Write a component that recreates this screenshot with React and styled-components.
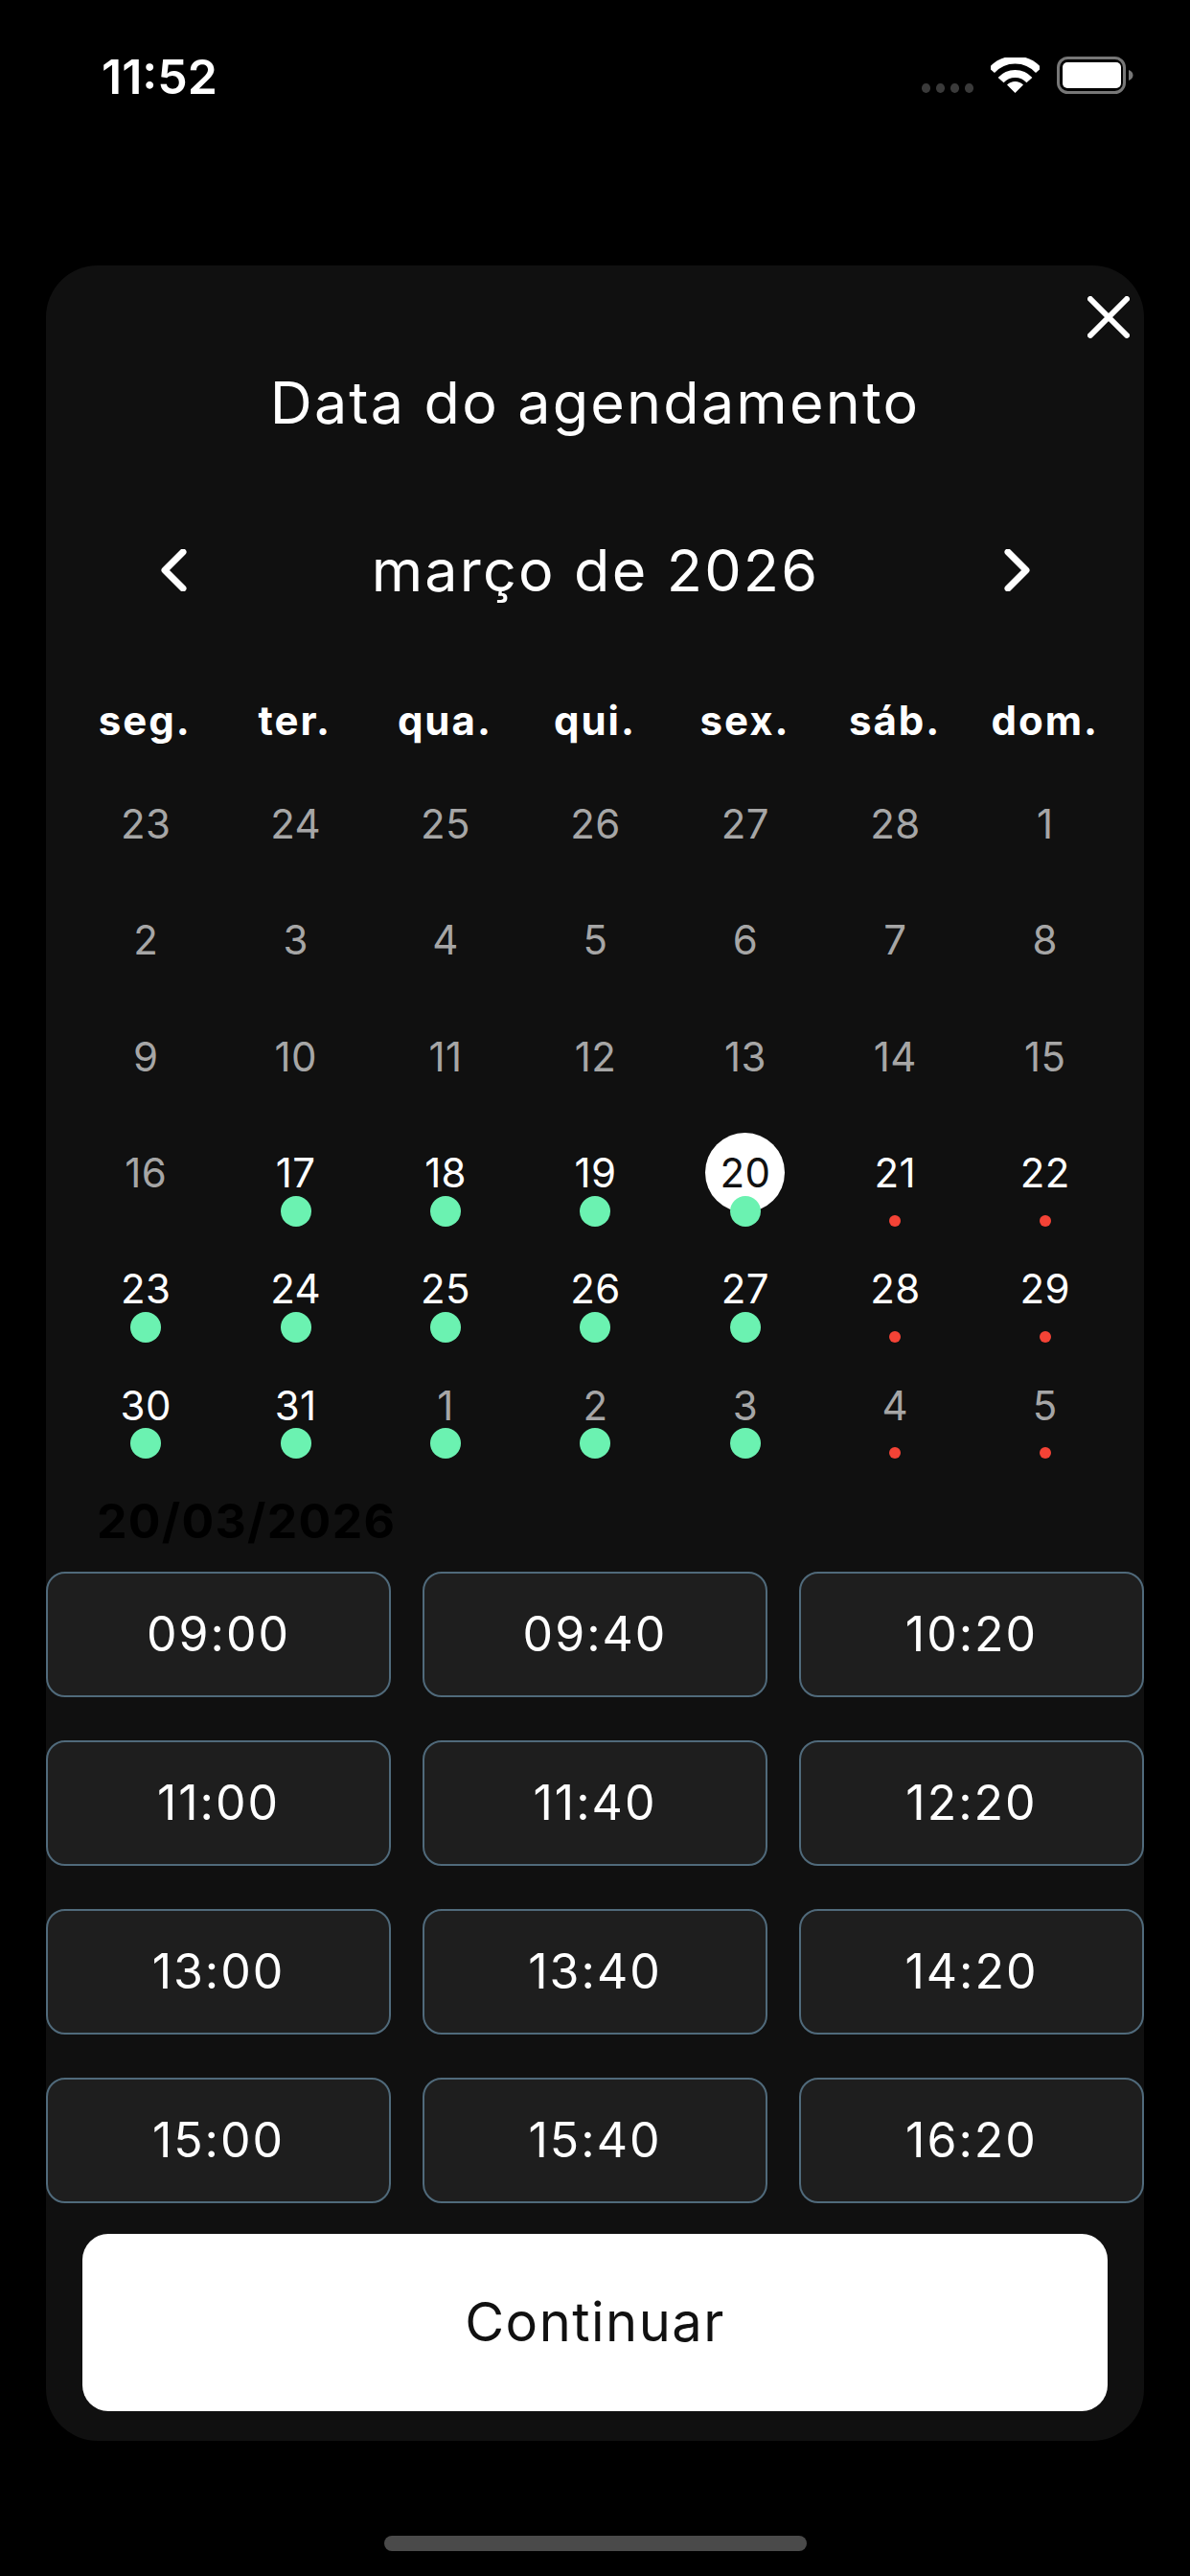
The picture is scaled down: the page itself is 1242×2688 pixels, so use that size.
import React from "react";
import styled, { createGlobalStyle } from "styled-components";

const GlobalStyle = createGlobalStyle`
  html, body {
    margin: 0;
    padding: 0;
    background: #000;
  }
  * {
    box-sizing: border-box;
  }
`;

const Page = styled.div`
  width: 1242px;
  height: 2688px;
  background: #000;
  font-family: Inter, "Liberation Sans", sans-serif;
  color: #fff;
  display: flex;
  flex-direction: column;
  align-items: center;
  overflow: hidden;
`;

const StatusBar = styled.div`
  width: 100%;
  height: 277px;
  padding: 59px 59px 0 106px;
  display: flex;
  justify-content: space-between;
  align-items: flex-start;
`;

const Clock = styled.div`
  font-size: 50px;
  line-height: 42px;
  font-weight: 600;
  letter-spacing: 0;
`;

const StatusIcons = styled.div`
  display: flex;
  align-items: flex-end;
  height: 39px;
`;

const SignalDots = styled.div`
  display: flex;
  gap: 5.5px;
  margin-right: 18px;
  margin-bottom: 1px;
`;

const SignalDot = styled.span`
  width: 9.5px;
  height: 10px;
  border-radius: 50%;
  background: #3a3a3a;
`;

const WifiIcon = styled.svg`
  width: 51px;
  height: 37px;
  margin-right: 18px;
  margin-bottom: 1px;
`;

const BatteryIcon = styled.svg`
  width: 80px;
  height: 39px;
`;

const Modal = styled.div`
  position: relative;
  width: 1146px;
  height: 2270px;
  background: #101010;
  border-radius: 54px;
  padding-top: 107px;
  display: flex;
  flex-direction: column;
`;

const CloseButton = styled.svg`
  position: absolute;
  top: 32px;
  right: 15px;
  width: 44px;
  height: 44px;
`;

const Title = styled.h1`
  margin: 0;
  font-size: 61px;
  line-height: 72px;
  font-weight: 400;
  text-align: center;
  letter-spacing: 2.2px;
`;

const MonthNav = styled.div`
  height: 72px;
  margin-top: 103px;
  padding: 0 118px 0 119px;
  display: flex;
  align-items: center;
  justify-content: space-between;
`;

const Chevron = styled.svg`
  width: 28px;
  height: 44px;
`;

const MonthLabel = styled.div`
  font-size: 61px;
  line-height: 72px;
  letter-spacing: 2.2px;
`;

const WeekGrid = styled.div`
  display: grid;
  grid-template-columns: repeat(7, 1fr);
  margin: 96px 25px 0;
  height: 50px;
  align-items: center;
`;

const WeekDay = styled.div`
  text-align: center;
  font-size: 42px;
  line-height: 50px;
  font-weight: 700;
  letter-spacing: 2px;
`;

const DayGrid = styled.div`
  display: grid;
  grid-template-columns: repeat(7, 1fr);
  grid-auto-rows: 121.3px;
  margin: 22px 25px 0 26px;
`;

const DayCell = styled.div`
  position: relative;
  display: flex;
  align-items: center;
  justify-content: center;
`;

const DayNumber = styled.div`
  position: relative;
  width: 83px;
  height: 83px;
  border-radius: 50%;
  display: flex;
  align-items: center;
  justify-content: center;
  font-size: 42px;
  font-weight: 400;
  letter-spacing: 0.4px;
  color: ${(p) => (p.$selected ? "#111" : p.$muted ? "#a6a6a6" : "#fff")};
  background: ${(p) => (p.$selected ? "#fff" : "transparent")};
`;

const Dot = styled.span`
  position: absolute;
  left: 50%;
  transform: translateX(-50%);
  border-radius: 50%;
  top: ${(p) => (p.$kind === "green" ? "85px" : "105px")};
  width: ${(p) => (p.$kind === "green" ? "32px" : "12px")};
  height: ${(p) => (p.$kind === "green" ? "32px" : "12px")};
  background: ${(p) => (p.$kind === "green" ? "#6bf2b1" : "#f44336")};
`;

const SelectedDate = styled.div`
  margin: 30px 0 0 53px;
  height: 60px;
  font-size: 50px;
  line-height: 60px;
  font-weight: 700;
  color: #000;
  letter-spacing: 1.3px;
`;

const TimeGrid = styled.div`
  display: grid;
  grid-template-columns: repeat(3, 360px);
  grid-auto-rows: 131px;
  justify-content: space-between;
  row-gap: 45px;
  margin-top: 23px;
`;

const TimeButton = styled.div`
  border: 2px solid #506a7b;
  border-radius: 20px;
  background: #1e1e1e;
  display: flex;
  align-items: center;
  justify-content: center;
  font-size: 50px;
  letter-spacing: 2px;
`;

const ContinueButton = styled.div`
  margin: 32px 38px 0;
  height: 185px;
  border-radius: 27px;
  background: #fff;
  color: #111;
  display: flex;
  align-items: center;
  justify-content: center;
  font-size: 56px;
  letter-spacing: 1.5px;
`;

const HomeBar = styled.div`
  width: 441px;
  height: 16px;
  margin-top: 99px;
  border-radius: 8px;
  background: #4a4a4a;
`;

const weekDays = ["seg.", "ter.", "qua.", "qui.", "sex.", "sáb.", "dom."];

const days = [
  ...[23, 24, 25, 26, 27, 28, 1, 2, 3, 4, 5, 6, 7, 8, 9, 10, 11, 12, 13, 14, 15, 16].map((n) => ({ n, muted: true })),
  { n: 17, dot: "green" },
  { n: 18, dot: "green" },
  { n: 19, dot: "green" },
  { n: 20, dot: "green", selected: true },
  { n: 21, dot: "red" },
  { n: 22, dot: "red" },
  { n: 23, dot: "green" },
  { n: 24, dot: "green" },
  { n: 25, dot: "green" },
  { n: 26, dot: "green" },
  { n: 27, dot: "green" },
  { n: 28, dot: "red" },
  { n: 29, dot: "red" },
  { n: 30, dot: "green" },
  { n: 31, dot: "green" },
  { n: 1, dot: "green", muted: true },
  { n: 2, dot: "green", muted: true },
  { n: 3, dot: "green", muted: true },
  { n: 4, dot: "red", muted: true },
  { n: 5, dot: "red", muted: true },
];

const times = [
  "09:00", "09:40", "10:20",
  "11:00", "11:40", "12:20",
  "13:00", "13:40", "14:20",
  "15:00", "15:40", "16:20",
];

const App = () => (
  <Page>
    <GlobalStyle />
    <StatusBar>
      <Clock>11:52</Clock>
      <StatusIcons>
        <SignalDots>
          <SignalDot />
          <SignalDot />
          <SignalDot />
          <SignalDot />
        </SignalDots>
        <WifiIcon viewBox="0 0 51 37">
          <path d="M1 13.4A33 33 0 0 1 50 13.4" fill="none" stroke="#fff" strokeWidth="8" />
          <path d="M10.6 23.6A20 20 0 0 1 40.4 23.6" fill="none" stroke="#fff" strokeWidth="8" />
          <path d="M25.5 37L17 28.6A12 12 0 0 1 34 28.6Z" fill="#fff" />
        </WifiIcon>
        <BatteryIcon viewBox="0 0 80 39">
          <rect x="1.5" y="1.5" width="69" height="36" rx="10" fill="none" stroke="#777" strokeWidth="3" />
          <rect x="6" y="6" width="61" height="27" rx="5" fill="#fff" />
          <path d="M75 14C78 15 79.5 17 79.5 19.5C79.5 22 78 24 75 25Z" fill="#777" />
        </BatteryIcon>
      </StatusIcons>
    </StatusBar>

    <Modal>
      <CloseButton viewBox="0 0 44 44">
        <path d="M3 3L41 41M41 3L3 41" stroke="#fff" strokeWidth="6" strokeLinecap="round" />
      </CloseButton>
      <Title>Data do agendamento</Title>
      <MonthNav>
        <Chevron viewBox="0 0 28 44">
          <path d="M24 3L5 22L24 41" fill="none" stroke="#fff" strokeWidth="7" strokeLinecap="round" strokeLinejoin="round" />
        </Chevron>
        <MonthLabel>março de 2026</MonthLabel>
        <Chevron viewBox="0 0 28 44">
          <path d="M4 3L23 22L4 41" fill="none" stroke="#fff" strokeWidth="7" strokeLinecap="round" strokeLinejoin="round" />
        </Chevron>
      </MonthNav>
      <WeekGrid>
        {weekDays.map((d) => (
          <WeekDay key={d}>{d}</WeekDay>
        ))}
      </WeekGrid>
      <DayGrid>
        {days.map((d, i) => (
          <DayCell key={i}>
            <DayNumber $muted={d.muted} $selected={d.selected}>{d.n}</DayNumber>
            {d.dot && <Dot $kind={d.dot} />}
          </DayCell>
        ))}
      </DayGrid>
      <SelectedDate>20/03/2026</SelectedDate>
      <TimeGrid>
        {times.map((t) => (
          <TimeButton key={t}>{t}</TimeButton>
        ))}
      </TimeGrid>
      <ContinueButton>Continuar</ContinueButton>
    </Modal>
    <HomeBar />
  </Page>
);

export default App;
